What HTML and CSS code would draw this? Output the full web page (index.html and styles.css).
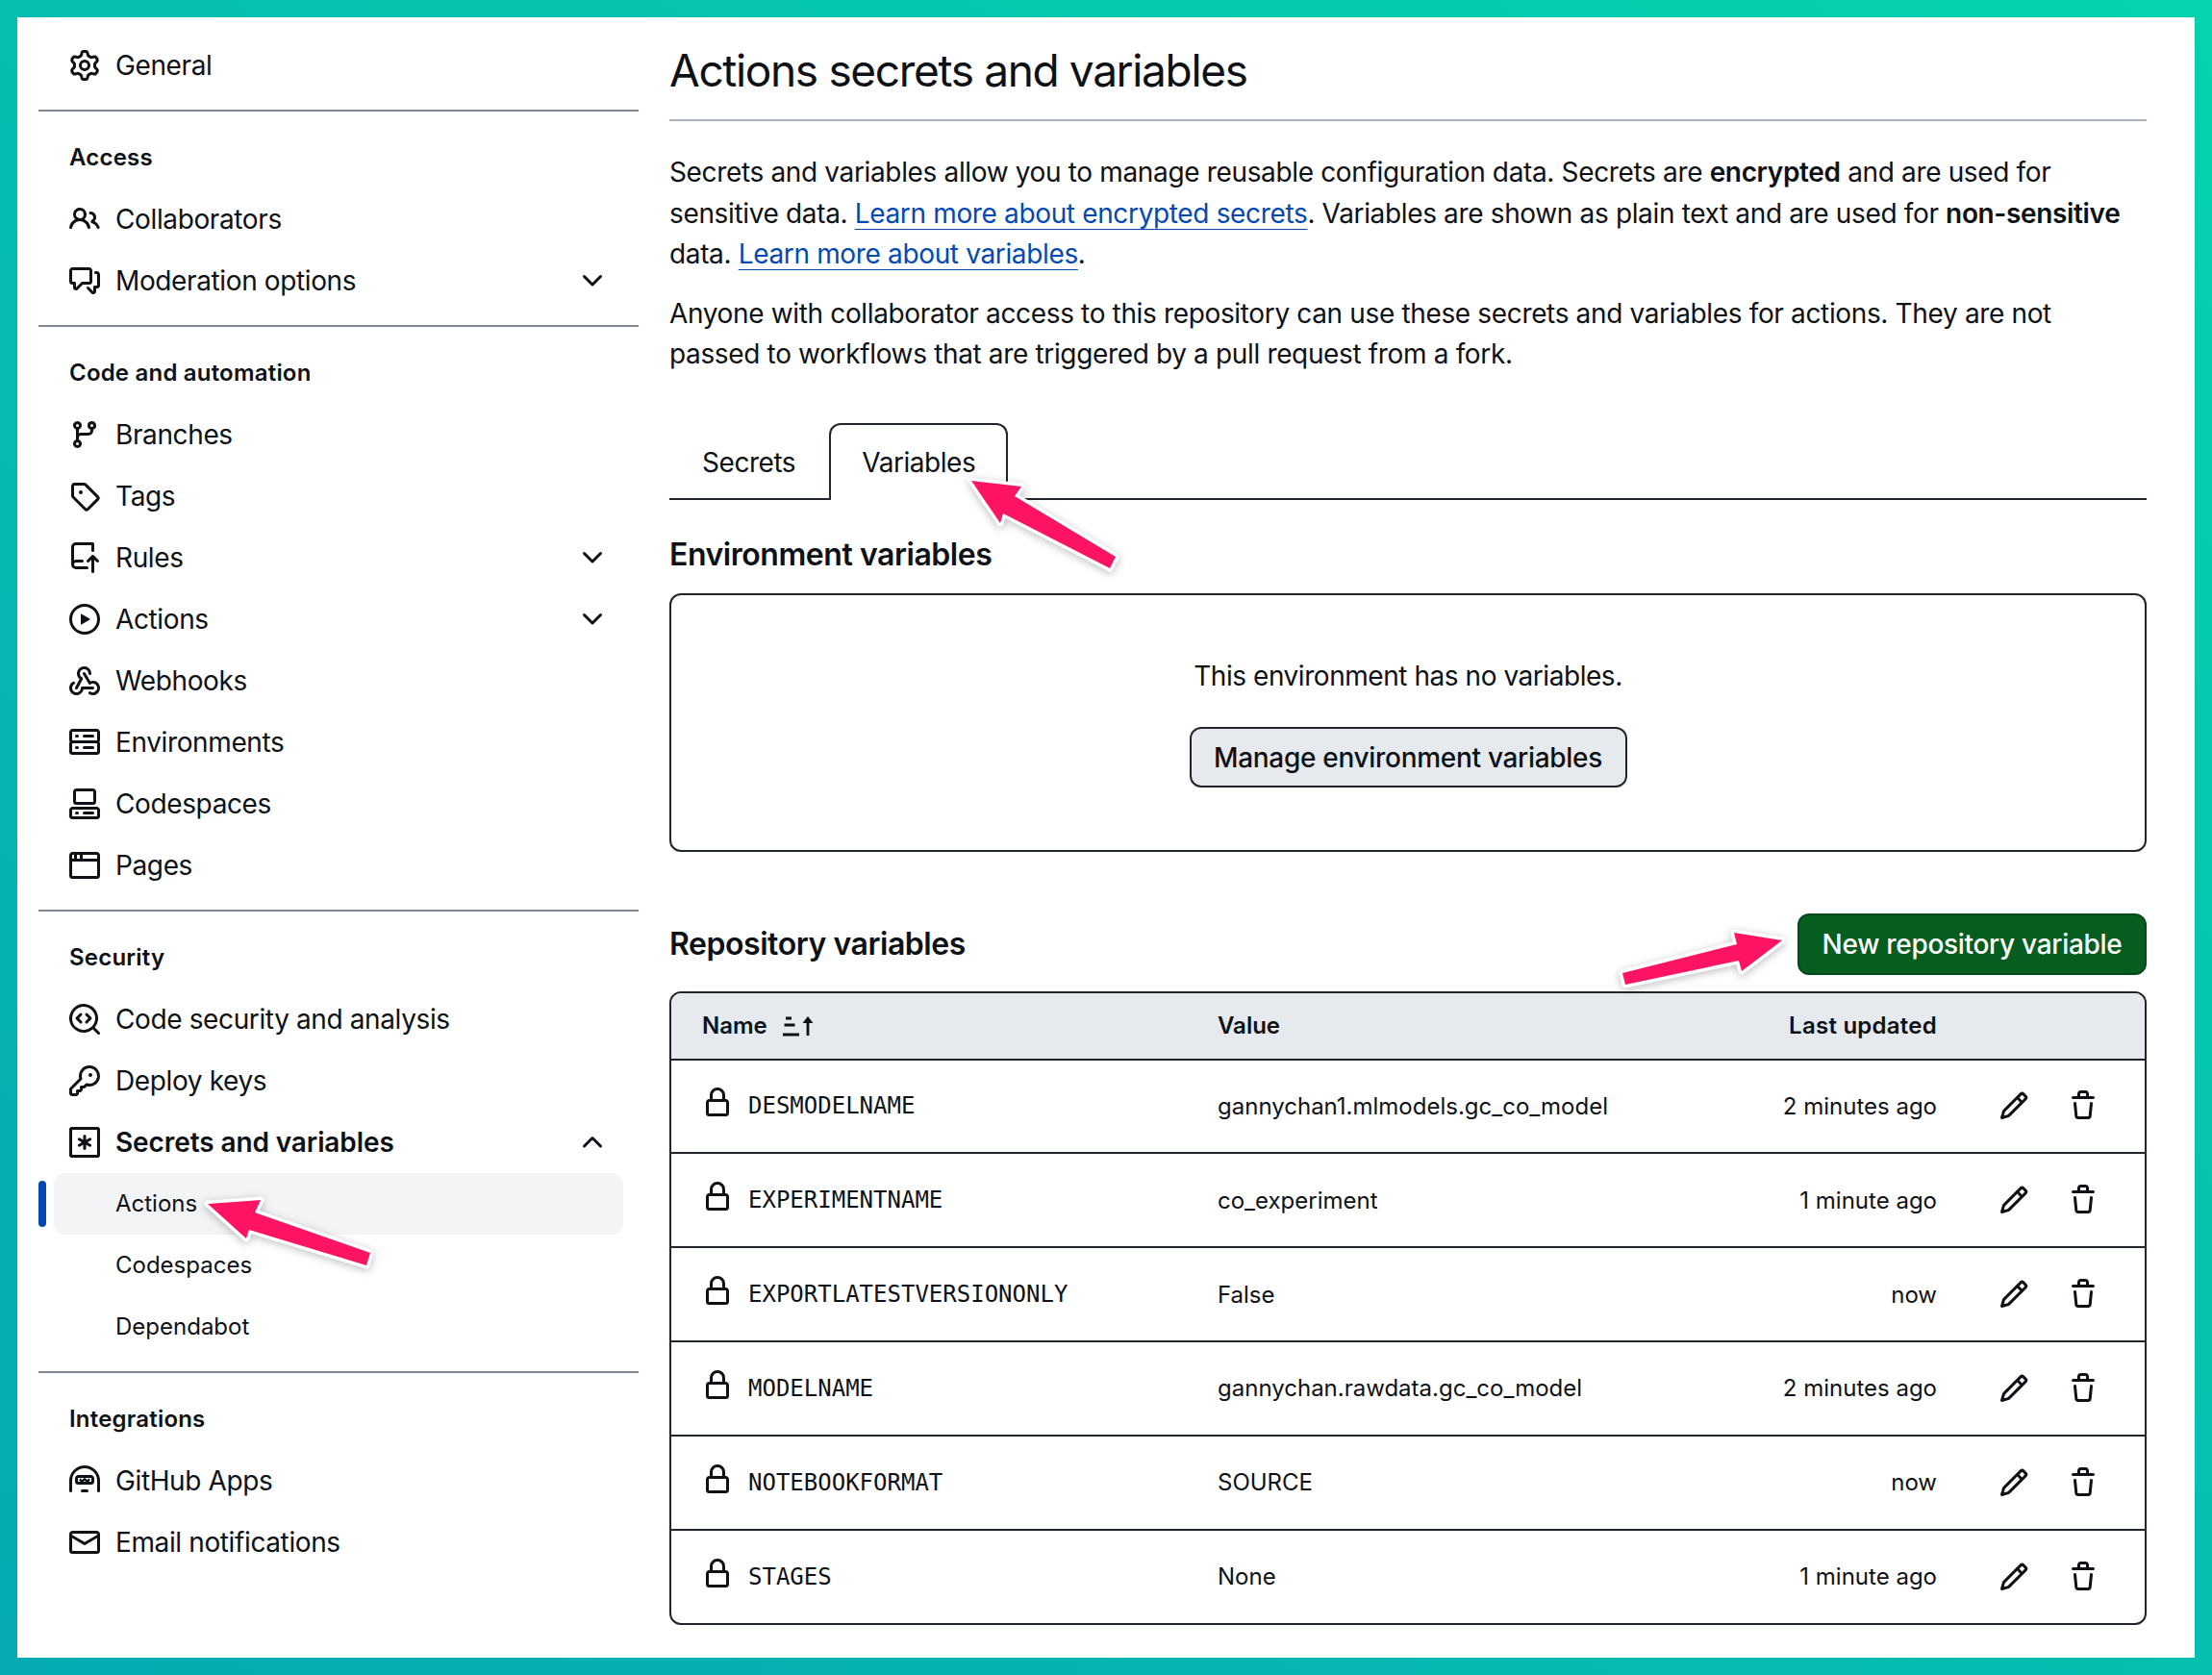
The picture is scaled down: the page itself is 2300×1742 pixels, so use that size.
FILE: index.html
```html
<!DOCTYPE html>
<html lang="en">
<head>
<meta charset="utf-8">
<title>Actions secrets and variables</title>
<link rel="stylesheet" href="styles.css">
</head>
<body>
<svg class="sprite" xmlns="http://www.w3.org/2000/svg">
<symbol id="i-gear" viewBox="0 0 16 16"><path d="M8 0a8.2 8.2 0 0 1 .701.031C9.444.095 9.99.645 10.16 1.29l.288 1.107c.018.066.079.158.212.224.231.114.454.243.668.386.123.082.233.09.299.071l1.103-.303c.644-.176 1.392.021 1.82.63.27.385.506.792.704 1.218.315.675.111 1.422-.364 1.891l-.814.806c-.049.048-.098.147-.088.294.016.257.016.515 0 .772-.01.147.038.246.088.294l.814.806c.475.469.679 1.216.364 1.891a7.977 7.977 0 0 1-.704 1.217c-.428.61-1.176.807-1.82.63l-1.102-.302c-.067-.019-.177-.011-.3.071a5.909 5.909 0 0 1-.668.386c-.133.066-.194.158-.211.224l-.29 1.106c-.168.646-.715 1.196-1.458 1.26a8.006 8.006 0 0 1-1.402 0c-.743-.064-1.289-.614-1.458-1.26l-.289-1.106c-.018-.066-.079-.158-.212-.224a5.738 5.738 0 0 1-.668-.386c-.123-.082-.233-.09-.299-.071l-1.103.303c-.644.176-1.392-.021-1.82-.63a8.12 8.12 0 0 1-.704-1.218c-.315-.675-.111-1.422.363-1.891l.815-.806c.05-.048.098-.147.088-.294a6.214 6.214 0 0 1 0-.772c.01-.147-.038-.246-.088-.294l-.815-.806C.635 6.045.431 5.298.746 4.623a7.92 7.92 0 0 1 .704-1.217c.428-.61 1.176-.807 1.82-.63l1.102.302c.067.019.177.011.3-.071.214-.143.437-.272.668-.386.133-.066.194-.158.211-.224l.29-1.106C6.009.645 6.556.095 7.299.03 7.53.01 7.764 0 8 0Zm-.571 1.525c-.036.003-.108.036-.137.146l-.289 1.105c-.147.561-.549.967-.998 1.189-.173.086-.34.183-.5.29-.417.278-.97.423-1.529.27l-1.103-.303c-.109-.03-.175.016-.195.045-.22.312-.412.644-.573.99-.014.031-.021.11.059.19l.815.806c.411.406.562.957.53 1.456a4.709 4.709 0 0 0 0 .582c.032.499-.119 1.05-.53 1.456l-.815.806c-.081.08-.073.159-.059.19.162.346.353.677.573.989.02.03.085.076.195.046l1.102-.303c.56-.153 1.113-.008 1.53.27.161.107.328.204.501.29.447.222.85.629.997 1.189l.289 1.105c.029.109.101.143.137.146a6.6 6.6 0 0 0 1.142 0c.036-.003.108-.036.137-.146l.289-1.105c.147-.561.549-.967.998-1.189.173-.086.34-.183.5-.29.417-.278.97-.423 1.529-.27l1.103.303c.109.029.175-.016.195-.045.22-.313.411-.644.573-.99.014-.031.021-.11-.059-.19l-.815-.806c-.411-.406-.562-.957-.53-1.456a4.709 4.709 0 0 0 0-.582c-.032-.499.119-1.05.53-1.456l.815-.806c.081-.08.073-.159.059-.19a6.464 6.464 0 0 0-.573-.989c-.02-.03-.085-.076-.195-.046l-1.102.303c-.56.153-1.113.008-1.53-.27a4.44 4.44 0 0 0-.501-.29c-.447-.222-.85-.629-.997-1.189l-.289-1.105c-.029-.11-.101-.143-.137-.146a6.6 6.6 0 0 0-1.142 0ZM11 8a3 3 0 1 1-6 0 3 3 0 0 1 6 0ZM9.5 8a1.5 1.5 0 1 0-3.001.001A1.5 1.5 0 0 0 9.5 8Z"/></symbol>
<symbol id="i-people" viewBox="0 0 16 16"><path d="M2 5.5a3.5 3.5 0 1 1 5.898 2.549 5.508 5.508 0 0 1 3.034 4.084.75.75 0 1 1-1.482.235 4 4 0 0 0-7.9 0 .75.75 0 0 1-1.482-.236A5.507 5.507 0 0 1 3.102 8.05 3.493 3.493 0 0 1 2 5.5ZM11 4a3.001 3.001 0 0 1 2.22 5.018 5.01 5.01 0 0 1 2.56 3.012.749.749 0 0 1-.885.954.752.752 0 0 1-.549-.514 3.507 3.507 0 0 0-2.522-2.372.75.75 0 0 1-.574-.73v-.352a.75.75 0 0 1 .416-.672A1.5 1.5 0 0 0 11 5.5.75.75 0 0 1 11 4Zm-5.5-.5a2 2 0 1 0-.001 3.999A2 2 0 0 0 5.5 3.5Z"/></symbol>
<symbol id="i-discuss" viewBox="0 0 16 16"><path d="M1.75 1h8.5c.966 0 1.75.784 1.75 1.75v5.5A1.75 1.75 0 0 1 10.25 10H7.061l-2.574 2.573A1.458 1.458 0 0 1 2 11.543V10h-.25A1.75 1.75 0 0 1 0 8.25v-5.5C0 1.784.784 1 1.75 1ZM1.5 2.75v5.5c0 .138.112.25.25.25h1a.75.75 0 0 1 .75.75v2.19l2.72-2.72a.749.749 0 0 1 .53-.22h3.5a.25.25 0 0 0 .25-.25v-5.5a.25.25 0 0 0-.25-.25h-8.5a.25.25 0 0 0-.25.25Zm13 2a.25.25 0 0 0-.25-.25h-.5a.75.75 0 0 1 0-1.5h.5c.966 0 1.75.784 1.75 1.75v5.5A1.75 1.75 0 0 1 14.25 12H14v1.543a1.458 1.458 0 0 1-2.487 1.03L9.22 12.28a.749.749 0 0 1 .326-1.275.749.749 0 0 1 .734.215l2.22 2.22v-2.19a.75.75 0 0 1 .75-.75h1a.25.25 0 0 0 .25-.25Z"/></symbol>
<symbol id="i-branch" viewBox="0 0 16 16"><path d="M9.5 3.25a2.25 2.25 0 1 1 3 2.122V6A2.5 2.5 0 0 1 10 8.5H6a1 1 0 0 0-1 1v1.128a2.251 2.251 0 1 1-1.5 0V5.372a2.25 2.25 0 1 1 1.5 0v1.836A2.493 2.493 0 0 1 6 7h4a1 1 0 0 0 1-1v-.628A2.25 2.25 0 0 1 9.5 3.25Zm-6 0a.75.75 0 1 0 1.5 0 .75.75 0 0 0-1.5 0Zm8.25-.75a.75.75 0 1 0 0 1.5.75.75 0 0 0 0-1.5ZM4.25 12a.75.75 0 1 0 0 1.5.75.75 0 0 0 0-1.5Z"/></symbol>
<symbol id="i-tag" viewBox="0 0 16 16"><path d="M1 7.775V2.75C1 1.784 1.784 1 2.75 1h5.025c.464 0 .91.184 1.238.513l6.25 6.25a1.75 1.75 0 0 1 0 2.474l-5.026 5.026a1.75 1.75 0 0 1-2.474 0l-6.25-6.25A1.752 1.752 0 0 1 1 7.775Zm1.5 0c0 .066.026.13.073.177l6.25 6.25a.25.25 0 0 0 .354 0l5.025-5.025a.25.25 0 0 0 0-.354l-6.25-6.25a.25.25 0 0 0-.177-.073H2.75a.25.25 0 0 0-.25.25ZM6 5a1 1 0 1 1 0 2 1 1 0 0 1 0-2Z"/></symbol>
<symbol id="i-rules" viewBox="0 0 16 16"><path d="M1 2.5A2.5 2.5 0 0 1 3.5 0h8.75a.75.75 0 0 1 .75.75v3.5a.75.75 0 0 1-1.5 0V1.5h-8a1 1 0 0 0-1 1v6.708A2.493 2.493 0 0 1 3.5 9h3.25a.75.75 0 0 1 0 1.5H3.5a1 1 0 0 0 0 2h5.75a.75.75 0 0 1 0 1.5H3.5A2.5 2.5 0 0 1 1 11.5Zm13.23 7.79h-.001l-1.224-1.224v6.184a.75.75 0 0 1-1.5 0V9.066L10.28 10.29a.75.75 0 0 1-1.06-1.061l2.505-2.504a.75.75 0 0 1 1.06 0L15.29 9.23a.751.751 0 0 1-.018 1.042.751.751 0 0 1-1.042.018Z"/></symbol>
<symbol id="i-play" viewBox="0 0 16 16"><path d="M8 0a8 8 0 1 1 0 16A8 8 0 0 1 8 0ZM1.5 8a6.5 6.5 0 1 0 13 0 6.5 6.5 0 0 0-13 0Zm4.879-2.773 4.264 2.559a.25.25 0 0 1 0 .428l-4.264 2.559A.25.25 0 0 1 6 10.559V5.442a.25.25 0 0 1 .379-.215Z"/></symbol>
<symbol id="i-webhook" viewBox="0 0 16 16"><path d="M5.5 4.25a2.25 2.25 0 0 1 4.5 0 .75.75 0 0 0 1.5 0 3.75 3.75 0 1 0-6.14 2.889l-2.272 4.258a.75.75 0 0 0 1.324.706L7 7.25a.75.75 0 0 0-.309-1.015A2.25 2.25 0 0 1 5.5 4.25Z"/><path d="M7.364 3.607a.75.75 0 0 1 1.03.257l2.608 4.349a3.75 3.75 0 1 1-.628 6.785.75.75 0 0 1 .752-1.299 2.25 2.25 0 1 0-.033-3.88.75.75 0 0 1-1.03-.256L7.107 4.636a.75.75 0 0 1 .257-1.03Z"/><path d="M2.9 8.776A.75.75 0 0 1 2.625 9.8 2.25 2.25 0 1 0 6 11.75a.75.75 0 0 1 .75-.751h5.5a.75.75 0 0 1 0 1.5H7.425a3.751 3.751 0 1 1-5.55-3.998.75.75 0 0 1 1.024.274Z"/></symbol>
<symbol id="i-server" viewBox="0 0 16 16"><path d="M1.75 1h12.5c.966 0 1.75.784 1.75 1.75v4c0 .372-.116.717-.314 1 .198.283.314.628.314 1v4a1.75 1.75 0 0 1-1.75 1.75H1.75A1.75 1.75 0 0 1 0 12.75v-4c0-.358.109-.707.314-1a1.739 1.739 0 0 1-.314-1v-4C0 1.784.784 1 1.75 1ZM1.5 2.75v4c0 .138.112.25.25.25h12.5a.25.25 0 0 0 .25-.25v-4a.25.25 0 0 0-.25-.25H1.75a.25.25 0 0 0-.25.25Zm.25 5.75a.25.25 0 0 0-.25.25v4c0 .138.112.25.25.25h12.5a.25.25 0 0 0 .25-.25v-4a.25.25 0 0 0-.25-.25ZM7 4.75A.75.75 0 0 1 7.75 4h4.5a.75.75 0 0 1 0 1.5h-4.5A.75.75 0 0 1 7 4.75ZM7.75 10h4.5a.75.75 0 0 1 0 1.5h-4.5a.75.75 0 0 1 0-1.5ZM3 4.75A.75.75 0 0 1 3.75 4h.5a.75.75 0 0 1 0 1.5h-.5A.75.75 0 0 1 3 4.75ZM3.75 10h.5a.75.75 0 0 1 0 1.5h-.5a.75.75 0 0 1 0-1.5Z"/></symbol>
<symbol id="i-codespaces" viewBox="0 0 16 16"><path d="M0 11.25c0-.966.784-1.75 1.75-1.75h12.5c.966 0 1.75.784 1.75 1.75v3A1.75 1.75 0 0 1 14.25 16H1.75A1.75 1.75 0 0 1 0 14.25Zm2-9.5C2 .784 2.784 0 3.75 0h8.5C13.216 0 14 .784 14 1.75v5a1.75 1.75 0 0 1-1.75 1.75h-8.5A1.75 1.75 0 0 1 2 6.75Zm1.75-.25a.25.25 0 0 0-.25.25v5c0 .138.112.25.25.25h8.5a.25.25 0 0 0 .25-.25v-5a.25.25 0 0 0-.25-.25Zm-2 9.5a.25.25 0 0 0-.25.25v3c0 .138.112.25.25.25h12.5a.25.25 0 0 0 .25-.25v-3a.25.25 0 0 0-.25-.25Z"/><path d="M7 12.75a.75.75 0 0 1 .75-.75h4.5a.75.75 0 0 1 0 1.5h-4.5a.75.75 0 0 1-.75-.75Zm-4 0a.75.75 0 0 1 .75-.75h.5a.75.75 0 0 1 0 1.5h-.5a.75.75 0 0 1-.75-.75Z"/></symbol>
<symbol id="i-browser" viewBox="0 0 16 16"><path d="M0 2.75C0 1.784.784 1 1.750 1h12.500c.966 0 1.750.784 1.750 1.750v10.500A1.750 1.750 0 0 1 14.250 15H1.750A1.750 1.750 0 0 1 0 13.250ZM14.500 6h-13v7.250c0 .138.112.250.250.250h12.500a.250.250 0 0 0 .250-.250Zm-9-3.500H4v2h1.500ZM2.500 2.500h-.750a.250.250 0 0 0-.250.250V4.500h1Zm4.500 0v2h7.500V2.750a.250.250 0 0 0-.250-.250Z"/></symbol>
<symbol id="i-codescan" viewBox="0 0 16 16"><path d="M8.47 4.97a.75.75 0 0 0 0 1.06L9.94 7.5 8.47 8.97a.75.75 0 1 0 1.06 1.06l2-2a.75.75 0 0 0 0-1.06l-2-2a.75.75 0 0 0-1.06 0ZM6.53 6.03a.75.75 0 0 0-1.06-1.06l-2 2a.75.75 0 0 0 0 1.06l2 2a.75.75 0 1 0 1.06-1.06L5.06 7.5l1.47-1.47Z"/><path d="M12.246 13.307a7.501 7.501 0 1 1 1.06-1.06l2.474 2.473a.749.749 0 0 1-.326 1.275.749.749 0 0 1-.734-.215ZM1.5 7.5a6.002 6.002 0 0 0 3.608 5.504 6.002 6.002 0 0 0 6.486-1.117.748.748 0 0 1 .292-.293A6 6 0 1 0 1.5 7.5Z"/></symbol>
<symbol id="i-key" viewBox="0 0 16 16"><path d="M10.5 0a5.499 5.499 0 1 1-1.288 10.848l-.932.932a.749.749 0 0 1-.53.22H7v.75a.749.749 0 0 1-.22.53l-.5.5a.749.749 0 0 1-.53.22H5v.75a.749.749 0 0 1-.22.53l-.5.5a.749.749 0 0 1-.53.22h-2A1.75 1.75 0 0 1 0 14.25v-2c0-.199.079-.389.22-.53l4.932-4.932A5.5 5.5 0 0 1 10.5 0Zm-4 5.5c-.001.431.069.86.205 1.269a.75.75 0 0 1-.181.768L1.5 12.56v1.69c0 .138.112.25.25.25h1.69l.06-.06v-1.19a.75.75 0 0 1 .75-.75h1.19l.06-.06v-1.19a.75.75 0 0 1 .75-.75h1.19l1.023-1.025a.75.75 0 0 1 .768-.18A4 4 0 1 0 6.5 5.5ZM11 6a1 1 0 1 1 0-2 1 1 0 0 1 0 2Z"/></symbol>
<symbol id="i-asterisk" viewBox="0 0 16 16"><path d="M0 1.25C0 .56.56 0 1.25 0h13.5C15.44 0 16 .56 16 1.25v13.5c0 .69-.56 1.25-1.25 1.25H1.25C.56 16 0 15.44 0 14.75ZM1.75 1.5a.25.25 0 0 0-.25.25v12.5c0 .138.112.25.25.25h12.5a.25.25 0 0 0 .25-.25V1.75a.25.25 0 0 0-.25-.25Z"/><path d="M8 4a.75.75 0 0 1 .75.75V6.7l1.69-.975a.75.75 0 0 1 .75 1.3L9.5 8l1.69.976a.75.75 0 0 1-.75 1.298L8.75 9.3v1.951a.75.75 0 0 1-1.5 0V9.299l-1.69.975a.75.75 0 0 1-.75-1.298L6.5 8l-1.69-.975a.75.75 0 0 1 .75-1.3l1.69.976V4.75A.75.75 0 0 1 8 4Z"/></symbol>
<symbol id="i-hubot" viewBox="0 0 16 16"><path d="M0 8a8 8 0 0 1 16 0v5.25a.75.75 0 0 1-1.5 0V8a6.5 6.5 0 1 0-13 0v5.25a.75.75 0 0 1-1.5 0Zm3-1.25C3 5.784 3.784 5 4.75 5h6.5c.966 0 1.75.784 1.75 1.75v1.5A1.75 1.75 0 0 1 11.25 10h-6.5A1.75 1.75 0 0 1 3 8.25Zm1.75-.25a.25.25 0 0 0-.25.25v1.5c0 .138.112.25.25.25h6.5a.25.25 0 0 0 .25-.25v-1.5a.25.25 0 0 0-.25-.25ZM6.75 12.5h2.5a.75.75 0 0 1 0 1.5h-2.5a.75.75 0 0 1 0-1.5Z"/><path class="zig" d="M5.4 7.2 6.6 8.3 8 7.2 9.4 8.3 10.6 7.2"/></symbol>
<symbol id="i-mail" viewBox="0 0 16 16"><path d="M1.75 2h12.5c.966 0 1.75.784 1.75 1.75v8.5A1.75 1.75 0 0 1 14.25 14H1.75A1.75 1.75 0 0 1 0 12.25v-8.5C0 2.784.784 2 1.75 2ZM1.5 12.251c0 .138.112.25.25.25h12.5a.25.25 0 0 0 .25-.25V5.809L8.38 9.397a.75.75 0 0 1-.76 0L1.5 5.809v6.442Zm13-8.181v-.32a.25.25 0 0 0-.25-.25H1.75a.25.25 0 0 0-.25.25v.32L8 7.88Z"/></symbol>
<symbol id="i-down" viewBox="0 0 16 16"><path d="M12.78 5.22a.749.749 0 0 1 0 1.06l-4.25 4.25a.749.749 0 0 1-1.06 0L3.22 6.28a.749.749 0 1 1 1.06-1.06L8 8.939l3.72-3.719a.749.749 0 0 1 1.06 0Z"/></symbol>
<symbol id="i-up" viewBox="0 0 16 16"><path d="M3.22 10.53a.749.749 0 0 1 0-1.06l4.25-4.25a.749.749 0 0 1 1.06 0l4.25 4.25a.749.749 0 1 1-1.06 1.06L8 6.811 4.28 10.53a.749.749 0 0 1-1.06 0Z"/></symbol>
<symbol id="i-lock" viewBox="0 0 16 16"><path d="M4 4a4 4 0 0 1 8 0v2h.25c.966 0 1.75.784 1.75 1.75v5.5A1.75 1.75 0 0 1 12.25 15h-8.5A1.75 1.75 0 0 1 2 13.25v-5.5C2 6.784 2.784 6 3.75 6H4Zm8.25 3.5h-8.5a.25.25 0 0 0-.25.25v5.5c0 .138.112.25.25.25h8.5a.25.25 0 0 0 .25-.25v-5.5a.25.25 0 0 0-.25-.25ZM10.5 6V4a2.5 2.5 0 1 0-5 0v2Z"/></symbol>
<symbol id="i-pencil" viewBox="0 0 16 16"><path d="M11.013 1.427a1.75 1.75 0 0 1 2.474 0l1.086 1.086a1.75 1.75 0 0 1 0 2.474l-8.61 8.61c-.21.21-.47.364-.756.445l-3.251.93a.75.75 0 0 1-.927-.928l.929-3.25c.081-.286.235-.547.445-.758l8.61-8.61Zm.176 4.823L9.75 4.81l-6.286 6.287a.253.253 0 0 0-.064.108l-.558 1.953 1.953-.558a.253.253 0 0 0 .108-.064Zm1.238-3.763a.25.25 0 0 0-.354 0L10.811 3.75l1.439 1.44 1.263-1.263a.25.25 0 0 0 0-.354Z"/></symbol>
<symbol id="i-trash" viewBox="0 0 16 16"><path d="M11 1.75V3h2.25a.75.75 0 0 1 0 1.5H2.75a.75.75 0 0 1 0-1.5H5V1.75C5 .784 5.784 0 6.75 0h2.5C10.216 0 11 .784 11 1.75ZM4.496 6.675l.66 6.6a.25.25 0 0 0 .249.225h5.19a.25.25 0 0 0 .249-.225l.66-6.6a.75.75 0 0 1 1.492.149l-.66 6.6A1.748 1.748 0 0 1 10.595 15h-5.19a1.75 1.75 0 0 1-1.741-1.575l-.66-6.6a.75.75 0 1 1 1.492-.15ZM6.5 1.75V3h3V1.75a.25.25 0 0 0-.25-.25h-2.5a.25.25 0 0 0-.25.25Z"/></symbol>
</svg>

<div class="frame">
  <aside class="sidebar">
    <a class="nav-row"><svg class="icon"><use href="#i-gear"/></svg><span class="nav-label">General</span></a>
    <hr class="nav-sep">
    <h3 class="nav-heading">Access</h3>
    <a class="nav-row"><svg class="icon"><use href="#i-people"/></svg><span class="nav-label">Collaborators</span></a>
    <a class="nav-row"><svg class="icon"><use href="#i-discuss"/></svg><span class="nav-label">Moderation options</span><svg class="chev"><use href="#i-down"/></svg></a>
    <hr class="nav-sep">
    <h3 class="nav-heading">Code and automation</h3>
    <a class="nav-row"><svg class="icon"><use href="#i-branch"/></svg><span class="nav-label">Branches</span></a>
    <a class="nav-row"><svg class="icon"><use href="#i-tag"/></svg><span class="nav-label">Tags</span></a>
    <a class="nav-row"><svg class="icon"><use href="#i-rules"/></svg><span class="nav-label">Rules</span><svg class="chev"><use href="#i-down"/></svg></a>
    <a class="nav-row"><svg class="icon"><use href="#i-play"/></svg><span class="nav-label">Actions</span><svg class="chev"><use href="#i-down"/></svg></a>
    <a class="nav-row"><svg class="icon"><use href="#i-webhook"/></svg><span class="nav-label">Webhooks</span></a>
    <a class="nav-row"><svg class="icon"><use href="#i-server"/></svg><span class="nav-label">Environments</span></a>
    <a class="nav-row"><svg class="icon"><use href="#i-codespaces"/></svg><span class="nav-label">Codespaces</span></a>
    <a class="nav-row"><svg class="icon"><use href="#i-browser"/></svg><span class="nav-label">Pages</span></a>
    <hr class="nav-sep">
    <h3 class="nav-heading">Security</h3>
    <a class="nav-row"><svg class="icon"><use href="#i-codescan"/></svg><span class="nav-label">Code security and analysis</span></a>
    <a class="nav-row"><svg class="icon"><use href="#i-key"/></svg><span class="nav-label">Deploy keys</span></a>
    <a class="nav-row"><svg class="icon"><use href="#i-asterisk"/></svg><span class="nav-label nav-strong">Secrets and variables</span><svg class="chev"><use href="#i-up"/></svg></a>
    <a class="nav-row nav-sub nav-current"><span class="nav-label">Actions</span></a>
    <a class="nav-row nav-sub"><span class="nav-label">Codespaces</span></a>
    <a class="nav-row nav-sub"><span class="nav-label">Dependabot</span></a>
    <hr class="nav-sep">
    <h3 class="nav-heading">Integrations</h3>
    <a class="nav-row"><svg class="icon"><use href="#i-hubot"/></svg><span class="nav-label">GitHub Apps</span></a>
    <a class="nav-row"><svg class="icon"><use href="#i-mail"/></svg><span class="nav-label">Email notifications</span></a>
  </aside>

  <main class="content">
    <h1 class="page-title">Actions secrets and variables</h1>
    <p class="lead">Secrets and variables allow you to manage reusable configuration data. Secrets are <b>encrypted</b> and are used for sensitive data. <a class="link">Learn more about encrypted secrets</a>. Variables are shown as plain text and are used for <b>non-sensitive</b> data. <a class="link">Learn more about variables</a>.</p>
    <p class="lead lead-next">Anyone with collaborator access to this repository can use these secrets and variables for actions. They are not passed to workflows that are triggered by a pull request from a fork.</p>

    <div class="tabs">
      <a class="tab tab-first">Secrets</a>
      <a class="tab tab-active">Variables</a>
    </div>

    <h2 class="section-title env-title">Environment variables</h2>
    <div class="empty-box">
      <p class="empty-text">This environment has no variables.</p>
      <a class="btn">Manage environment variables</a>
    </div>

    <div class="repo-head">
      <h2 class="section-title">Repository variables</h2>
      <a class="btn-primary">New repository variable</a>
    </div>

    <div class="vars">
      <div class="vars-row vars-header">
        <div class="name-head">Name <svg class="sort" viewBox="0 0 32 32"><path d="M3 8h6M1.500 15h11M0 25h17"/><path d="M26 26V10"/><polygon class="sort-head" points="26,6 31.500,13 20.500,13"/></svg></div>
        <div>Value</div>
        <div class="cell-updated updated-head">Last updated</div>
        <div></div>
      </div>
      <div class="vars-row">
        <div class="cell-name"><svg class="lock"><use href="#i-lock"/></svg><code>DESMODELNAME</code></div>
        <div>gannychan1.mlmodels.gc_co_model</div>
        <div class="cell-updated">2 minutes ago</div>
        <div class="cell-actions"><svg class="act"><use href="#i-pencil"/></svg><svg class="act"><use href="#i-trash"/></svg></div>
      </div>
      <div class="vars-row">
        <div class="cell-name"><svg class="lock"><use href="#i-lock"/></svg><code>EXPERIMENTNAME</code></div>
        <div>co_experiment</div>
        <div class="cell-updated">1 minute ago</div>
        <div class="cell-actions"><svg class="act"><use href="#i-pencil"/></svg><svg class="act"><use href="#i-trash"/></svg></div>
      </div>
      <div class="vars-row">
        <div class="cell-name"><svg class="lock"><use href="#i-lock"/></svg><code>EXPORTLATESTVERSIONONLY</code></div>
        <div>False</div>
        <div class="cell-updated">now</div>
        <div class="cell-actions"><svg class="act"><use href="#i-pencil"/></svg><svg class="act"><use href="#i-trash"/></svg></div>
      </div>
      <div class="vars-row">
        <div class="cell-name"><svg class="lock"><use href="#i-lock"/></svg><code>MODELNAME</code></div>
        <div>gannychan.rawdata.gc_co_model</div>
        <div class="cell-updated">2 minutes ago</div>
        <div class="cell-actions"><svg class="act"><use href="#i-pencil"/></svg><svg class="act"><use href="#i-trash"/></svg></div>
      </div>
      <div class="vars-row">
        <div class="cell-name"><svg class="lock"><use href="#i-lock"/></svg><code>NOTEBOOKFORMAT</code></div>
        <div>SOURCE</div>
        <div class="cell-updated">now</div>
        <div class="cell-actions"><svg class="act"><use href="#i-pencil"/></svg><svg class="act"><use href="#i-trash"/></svg></div>
      </div>
      <div class="vars-row">
        <div class="cell-name"><svg class="lock"><use href="#i-lock"/></svg><code>STAGES</code></div>
        <div>None</div>
        <div class="cell-updated">1 minute ago</div>
        <div class="cell-actions"><svg class="act"><use href="#i-pencil"/></svg><svg class="act"><use href="#i-trash"/></svg></div>
      </div>
    </div>
  </main>
</div>

<svg class="arrows" viewBox="0 0 2300 1742" xmlns="http://www.w3.org/2000/svg">
  <polygon class="arrow" points="1010,500 1062,506 1055,516 1160,579 1154,591 1043,534 1040,544"/>
  <polygon class="arrow" points="216,1252 271,1248 265,1261 385,1303 381,1316 259,1279 256,1288"/>
  <polygon class="arrow" points="1853,978 1803,970 1806,982 1687,1012 1690,1024 1808,999 1811,1010"/>
</svg>
</body>
</html>
```
FILE: styles.css
```css
* { box-sizing: border-box; }
html, body { margin: 0; padding: 0; }
body {
  position: relative;
  width: 2300px;
  height: 1742px;
  padding: 18px;
  overflow: hidden;
  background: linear-gradient(to bottom left, #05d2ae 0%, #05abb1 100%);
  font-family: Inter, "Liberation Sans", sans-serif;
  color: #0e1116;
}
.sprite { position: absolute; width: 0; height: 0; }
.sprite path { fill: currentColor; }
.zig { fill: none !important; stroke: currentColor; stroke-width: 1.2; }

.frame {
  display: flex;
  width: 2264px;
  height: 1706px;
  background: #fff;
}

/* sidebar */
.sidebar { flex: none; width: 624px; margin: 18px 0 0 22px; font-size: 28px; }
.nav-row {
  display: flex;
  align-items: center;
  position: relative;
  height: 64px;
  padding-left: 32px;
  letter-spacing: -0.38px;
}
.icon { flex: none; width: 32px; height: 32px; margin-right: 16px; fill: #0e1116; }
.nav-label { flex: 1; }
.nav-strong { font-weight: 600; letter-spacing: -0.1px; }
.chev { flex: none; width: 32px; height: 32px; margin-right: 32px; fill: #0e1116; }
.nav-sep { height: 2px; margin: 14px 0 16px; border: 0; background: #818b98; }
.nav-heading {
  display: flex;
  align-items: center;
  height: 64px;
  margin: 0;
  padding: 0 0 2px 32px;
  font-size: 24px;
  font-weight: 600;
  letter-spacing: 0.2px;
}
.nav-sub {
  margin-left: 16px;
  margin-right: 16px;
  padding: 0 0 2px 64px;
  font-size: 24px;
  letter-spacing: 0;
  border-radius: 12px;
}
.nav-current { background: #f3f4f6; }
.nav-current::before {
  content: "";
  position: absolute;
  left: -16px;
  top: 8px;
  width: 8px;
  height: 48px;
  border-radius: 6px;
  background: #0349b4;
}

/* main */
.content { flex: none; width: 1536px; margin-left: 32px; }
.page-title {
  height: 108px;
  margin: 0;
  padding-top: 31px;
  border-bottom: 2px solid #acb3bc;
  font-size: 46px;
  line-height: 48px;
  font-weight: 400;
  letter-spacing: -1.350px;
}
.lead { margin: 32px 0 0; font-size: 28px; line-height: 42.5px; letter-spacing: -0.35px; }
.lead b { font-weight: 600; }
.lead-next { margin-top: 19px; }
.link { color: #0349b4; text-decoration: underline; text-underline-offset: 6px; text-decoration-thickness: 1px; }

.tabs {
  display: flex;
  align-items: flex-end;
  height: 80px;
  margin-top: 50px;
  border-bottom: 2px solid #20252c;
  font-size: 28px;
}
.tab {
  display: flex;
  align-items: center;
  height: 80px;
  padding: 0 32px;
  margin-bottom: -2px;
  border: 2px solid transparent;
  border-bottom: 0;
  border-radius: 12px 12px 0 0;
  letter-spacing: -0.45px;
}
.tab-first { padding-right: 33px; }
.tab-active { border-color: #20252c; background: #fff; }

.section-title { margin: 0; font-size: 32px; line-height: 40px; font-weight: 600; letter-spacing: -0.45px; }
.env-title { margin-top: 37px; }
.empty-box {
  display: flex;
  flex-direction: column;
  align-items: center;
  height: 269px;
  margin-top: 20px;
  padding-top: 64.500px;
  border: 2px solid #20252c;
  border-radius: 12px;
}
.empty-text { margin: 0; font-size: 28px; line-height: 40px; letter-spacing: -0.45px; }
.btn {
  display: flex;
  align-items: center;
  justify-content: center;
  width: 455px;
  height: 63px;
  margin-top: 33px;
  border: 2px solid #20252c;
  border-radius: 12px;
  background: #e6eaef;
  font-size: 28px;
  font-weight: 500;
  letter-spacing: -0.3px;
}
.repo-head {
  display: flex;
  align-items: center;
  justify-content: space-between;
  margin-top: 64px;
}
.btn-primary {
  display: flex;
  align-items: center;
  justify-content: center;
  width: 363px;
  height: 64px;
  border: 2px solid #04491a;
  border-radius: 12px;
  background: #055d20;
  color: #fff;
  font-size: 28px;
  font-weight: 500;
  letter-spacing: -0.3px;
}

.vars {
  margin-top: 17px;
  border: 2px solid #20252c;
  border-radius: 12px;
  overflow: hidden;
  font-size: 24px;
}
.vars-row {
  display: grid;
  grid-template-columns: 568px 508px 240px 216px;
  align-items: center;
  height: 97.850px;
  border-top: 2px solid #20252c;
}
.vars-row > :first-child { padding-left: 32px; }
.vars-header { height: 68px; border-top: 0; background: #e6eaef; font-weight: 600; }
.name-head { display: flex; align-items: center; gap: 16px; }
.sort { width: 32px; height: 32px; fill: none; stroke: #0e1116; stroke-width: 2.800; }
.sort-head { fill: #0e1116; stroke-width: 0; }
.updated-head { letter-spacing: 0.25px; }
.cell-updated { text-align: right; }
.cell-name { display: flex; align-items: center; }
.lock { flex: none; width: 32px; height: 32px; margin-right: 16px; margin-top: -6px; fill: #0e1116; }
code { font-family: "DejaVu Sans Mono", "Liberation Mono", monospace; font-size: 24px; }
.cell-actions { display: flex; align-items: center; gap: 40px; padding-left: 64px; }
.act { flex: none; width: 32px; height: 32px; fill: #0e1116; }

.arrows { position: absolute; left: 0; top: 0; width: 2300px; height: 1742px; pointer-events: none; }
.arrow {
  fill: #ff1463;
  stroke: #fff;
  stroke-width: 7;
  stroke-linejoin: round;
  paint-order: stroke;
  filter: drop-shadow(0 2px 4px rgba(0, 0, 0, 0.25));
}
```
